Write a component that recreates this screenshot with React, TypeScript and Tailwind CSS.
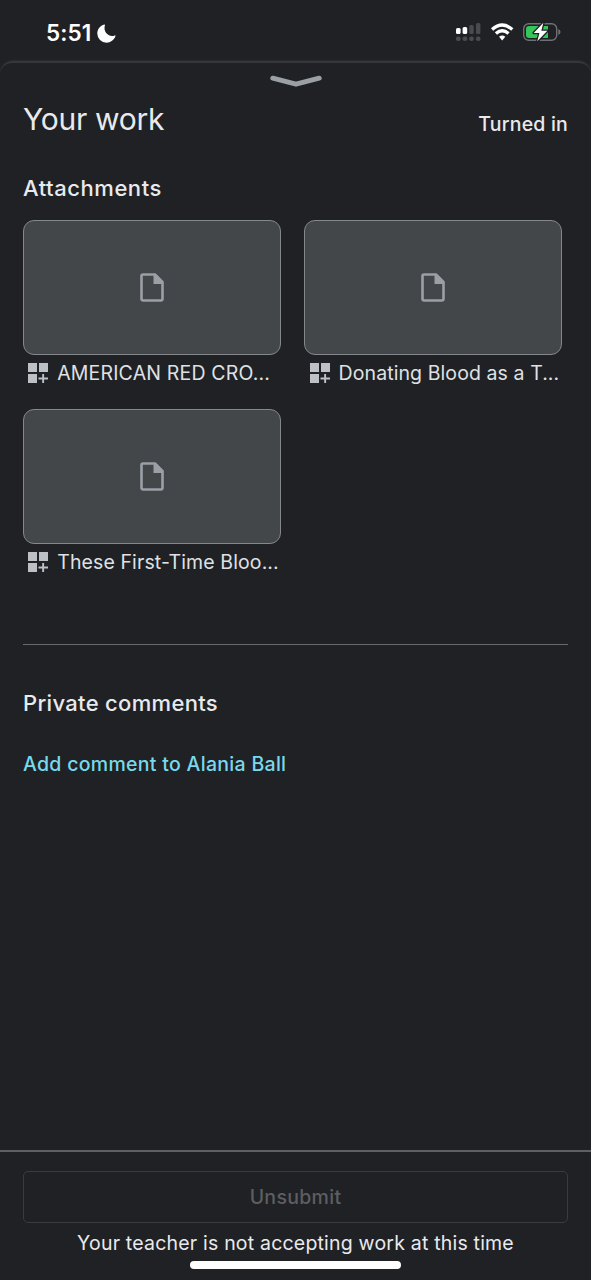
import React from "react";

function StatusBar() {
  return (
    <header className="flex h-[61px] shrink-0 items-start justify-between pl-[46px] pr-[30px]">
      <div className="flex items-center gap-[6px] pt-[18px]">
        <span className="font-['Inter',sans-serif] text-[22.5px] font-semibold leading-[30px] tracking-[0.1px] text-white">5:51</span>
        <svg width="19" height="19" viewBox="0 0 19 19" fill="#fff">
          <path d="M7.3.4C3.2 1.5.3 5.2.3 9.5a9.2 9.2 0 0 0 9.2 9.2c4.2 0 7.6-2.6 9-6.6.1-.6-.3-.9-.8-.7-5.8 2.2-11.8-3.2-9.8-10.2.2-.5-.1-.9-.6-.8Z" />
        </svg>
      </div>
      <div className="flex pt-[22px]">
        <svg width="106" height="21" viewBox="0 0 106 21">
          <g fill="#fff">
            <rect x="1" y="6" width="4.6" height="6" rx="1.5" />
            <rect x="7.6" y="5" width="4.6" height="7" rx="1.5" />
          </g>
          <g fill="#4a4b4e">
            <rect x="14.3" y="3" width="4.4" height="9" rx="1.5" />
            <rect x="21" y="1" width="4.4" height="11" rx="1.5" />
            <rect x="1" y="14.5" width="4.6" height="4.5" rx="1.8" />
            <rect x="7.6" y="14.5" width="4.6" height="4.5" rx="1.8" />
            <rect x="14.3" y="14.5" width="4.4" height="4.5" rx="1.8" />
            <rect x="21" y="14.5" width="4.4" height="4.5" rx="1.8" />
          </g>
          <g fill="none" stroke="#fff" strokeWidth="3.3">
            <path d="M37.1 7.6Q47.2-1.5 57.3 7.6" />
            <path d="M40.9 11.5Q47.2 6 53.5 11.5" />
          </g>
          <path d="M44.1 14.8Q47.2 12 50.3 14.8L47.2 18.4Z" fill="#fff" />
          <rect x="68.7" y="1.7" width="33" height="16.6" rx="5" fill="none" stroke="#6f7073" strokeWidth="1.4" />
          <path d="M103.3 7q2.2.9 2.2 3t-2.2 3Z" fill="#6f7073" />
          <path d="M74.2 4H93v12H74.2q-3.2 0-3.2-3.2V7.2Q71 4 74.2 4Z" fill="#33c759" />
          <path d="M88.4.8 78.7 11h5.7l-2.1 8.3L92.4 8.8h-6.1Z" fill="#fff" stroke="#202124" strokeWidth="2.6" paintOrder="stroke" strokeLinejoin="round" />
        </svg>
      </div>
    </header>
  );
}

function Attachment({ title, spacing }: { title: string; spacing: string }) {
  return (
    <article className="h-[189px] w-[258px]">
      <div className="flex h-[135px] items-center justify-center rounded-[11px] border border-[#84888c] bg-[#44474a]">
        <svg width="24" height="29" viewBox="0 0 24 29">
          <path d="M3 1.5H15L22.5 9V25.8Q22.5 27.5 20.8 27.5H3.2Q1.5 27.5 1.5 25.8V3Q1.5 1.5 3 1.5Z" fill="none" stroke="#9aa0a6" strokeWidth="2.6" />
          <path d="M13.5 1H16L23 8.5V11H13.5Z" fill="#9aa0a6" />
        </svg>
      </div>
      <div className="flex items-center pl-[5.4px] pt-[4.4px]">
        <svg className="shrink-0" width="20" height="20" viewBox="0 0 20 20" fill="#bdc1c6">
          <path d="M0 0h9v9H0zM11 0h9v9h-9zM0 11h9v9H0zM14.2 11h1.9v3.6H20v1.8h-3.9V20h-1.9v-3.6h-3.7v-1.8h3.7z" />
        </svg>
        <span className={`ml-[8.8px] whitespace-nowrap text-[19.5px] leading-[28px] text-[#dfe1e5] ${spacing}`}>{title}</span>
      </div>
    </article>
  );
}

export default function App() {
  return (
    <div className="flex h-[1280px] w-[591px] flex-col overflow-hidden bg-[#202124] font-['Inter',sans-serif] text-[#e8eaed]">
      <StatusBar />
      <main className="flex flex-1 flex-col rounded-t-[13px] border-t-2 border-[#36373a] shadow-[0_-1px_2px_#2c2d30]">
        <div className="flex h-[26px] justify-center pt-[12px]">
          <svg width="52" height="13" viewBox="0 0 52 13" fill="none" stroke="#9aa0a6" strokeWidth="5" strokeLinecap="round" strokeLinejoin="round">
            <path d="M2.8 3.2 26 9.2 49.2 3.2" />
          </svg>
        </div>
        <div className="flex h-[80px] justify-between px-[23px]">
          <h1 className="pt-[10px] text-[30px] font-normal leading-[40px] tracking-[-0.3px]">Your work</h1>
          <span className="pt-[20px] text-[19.5px] font-medium leading-[30px] tracking-[0.2px]">Turned in</span>
        </div>
        <section className="px-[23px]">
          <h2 className="h-[51px] pt-[4px] text-[22px] font-medium leading-[30px] tracking-[0.55px]">Attachments</h2>
          <div className="grid grid-cols-[258px_258px] gap-x-[23.4px]">
            <Attachment title="AMERICAN RED CRO..." spacing="tracking-[0.17px]" />
            <Attachment title="Donating Blood as a T..." spacing="tracking-[0.09px]" />
            <Attachment title="These First-Time Bloo..." spacing="tracking-[0.11px]" />
          </div>
        </section>
        <section className="mx-[23px] mt-[45.5px] border-t-[1.5px] border-[#67696d] pt-[43px]">
          <h2 className="text-[22px] font-medium leading-[30px] tracking-[0.32px]">Private comments</h2>
          <button className="mt-[31px] block text-[19.5px] font-medium leading-[30px] tracking-[0.3px] text-[#78d9ec]">Add comment to Alania Ball</button>
        </section>
        <footer className="mt-auto flex h-[130px] flex-col items-center border-t-2 border-[#5f6063] px-[23px] pt-[19px]">
          <button className="h-[52px] w-full rounded-[5px] border border-[#3a3b3e] pt-[2px] text-[19.5px] font-medium tracking-[0.3px] text-[#5d5e61]">Unsubmit</button>
          <p className="whitespace-nowrap pt-[5px] text-[19.5px] leading-[30px] tracking-[0.2px]">Your teacher is not accepting work at this time</p>
          <div className="mt-[3px] h-[8px] w-[211px] rounded-full bg-white" />
        </footer>
      </main>
    </div>
  );
}
